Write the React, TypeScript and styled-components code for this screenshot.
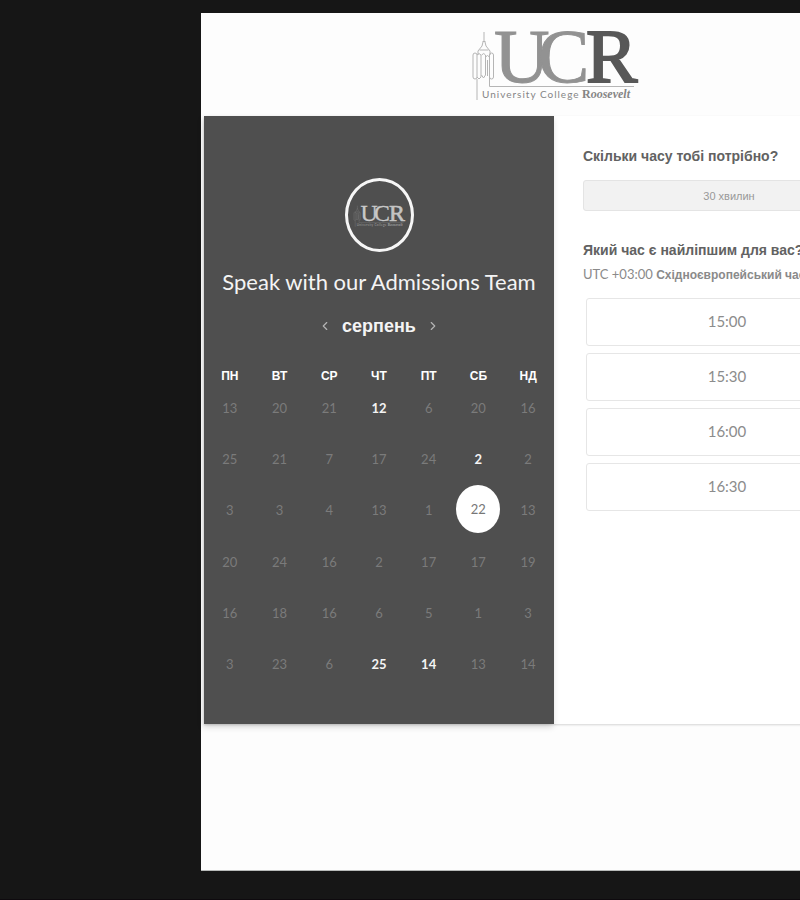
import React from "react";
import styled, { createGlobalStyle, css } from "styled-components";
import { ChevronLeft, ChevronRight } from "lucide-react";

const sans = `"Liberation Sans", Arial, sans-serif`;
const human = `Lato, "Liberation Sans", sans-serif`;

const GlobalStyle = createGlobalStyle`
  *, *::before, *::after { box-sizing: border-box; }
  body { margin: 0; background: #161616; font-family: ${sans}; }
  button { font: inherit; color: inherit; background: none; border: 0; padding: 0; cursor: pointer; }
  h1, h2, p { margin: 0; }
`;

const Page = styled.div`
  min-height: 100vh;
  padding: 13px 0 28px 25%;
  overflow: hidden;
  background: #161616;
  border-bottom: 2px solid #0e0a0e;
`;

const Sheet = styled.div`
  min-width: 707px;
  padding: 0 4px 146px 3px;
  margin-left: 1px;
  background: #fdfdfd;
  border-bottom: 1px solid #b8bab9;
`;

const Header = styled.header`
  display: flex;
  justify-content: center;
  height: 103px;
  padding-top: 9px;
`;

const Card = styled.main`
  display: grid;
  grid-template-columns: 1fr 1fr;
  background: #fff;
  box-shadow: 0 1px 2px rgba(0, 0, 0, 0.16);
`;

const CalendarPanel = styled.section`
  display: flex;
  flex-direction: column;
  align-items: center;
  padding: 62px 1px 34px;
  background: #4f4f4f;
  color: #f4f4f4;
  box-shadow: -1px 3px 6px rgba(0, 0, 0, 0.16);
`;

const Avatar = styled.div`
  display: grid;
  place-items: center;
  width: 69px;
  height: 74px;
  border: 3px solid #f6f6f6;
  border-radius: 50%;
`;

const Title = styled.h1`
  margin-top: 14px;
  font: 400 22px/32px ${human};
  white-space: nowrap;
`;

const MonthNav = styled.nav`
  display: flex;
  align-items: center;
  gap: 10px;
  height: 28px;
  margin-top: 14px;
`;

const MonthName = styled.h2`
  font: 700 18px/28px ${sans};
`;

const ArrowButton = styled.button`
  display: grid;
  place-items: center;
  width: 14px;
  height: 24px;
  color: #b4b4b4;
`;

const Calendar = styled.table`
  width: 100%;
  height: 320px;
  margin-top: 30px;
  table-layout: fixed;
  border-collapse: collapse;
  text-align: center;
`;

const Weekday = styled.th`
  height: 12px;
  padding: 0;
  font: 700 12px/12px ${sans};
  color: #fff;
`;

type DayState = "off" | "open" | "selected";

const DayCell = styled.td<{ $state: DayState }>`
  height: 51px;
  padding: 0;
  vertical-align: ${(p) => (p.$state === "selected" ? "top" : "middle")};
`;

const Day = styled.button<{ $state: DayState }>`
  display: block;
  width: 44px;
  height: 48px;
  margin: 0 auto;
  border-radius: 50%;
  font: 400 13px/20px ${human};
  color: #7b7b7b;
  ${(p) => p.$state === "open" && css`color: #f4f4f4; font-weight: 700;`}
  ${(p) => p.$state === "selected" && css`color: #777; background: #fff;`}
`;

const TimePanel = styled.section`
  padding: 30px 29px 29px;
  color: #626262;
`;

const Question = styled.h2`
  font: 700 14px/20px ${sans};
  white-space: nowrap;
`;

const Duration = styled.button`
  display: block;
  width: 100%;
  height: 31px;
  margin: 14px 0 29px;
  border: 1px solid #e4e4e4;
  border-radius: 3px;
  background: #f2f2f2;
  color: #999;
  font: 400 11px/20px ${sans};
`;

const Zone = styled.p`
  margin-top: 4px;
  font: 400 13px/20px ${human};
  color: #8a8a8a;
  white-space: nowrap;

  b { font: 700 12px/20px ${sans}; }
`;

const Slots = styled.div`
  display: grid;
  gap: 7px;
  margin-top: 13px;
  padding: 0 7px 0 3px;
`;

const Slot = styled.button`
  height: 48px;
  padding-bottom: 2px;
  border: 1px solid #e6e6e6;
  border-radius: 3px;
  background: #fff;
  color: #8c8c8c;
  font: 400 15px/20px ${human};
`;

const LogoSvg = styled.svg`
  overflow: visible;
`;

interface LogoProps {
  width: number;
  height: number;
  main: string;
  accent: string;
  caption: string;
  line: string;
}

function Logo({ width, height, main, accent, caption, line }: LogoProps) {
  return (
    <LogoSvg width={width} height={height} viewBox="0 0 168 80" role="img" aria-label="University College Roosevelt">
      <g fill="none" stroke={line} strokeWidth="1">
        <path d="M14 10v10M12.500 19.500h3M13 20l-1 4-4 5v4M15 20l1 4 4 5v4M9.500 28h9" />
        <rect x="3" y="31" width="4" height="26" rx="2" />
        <path d="M7 33q2-3 4 0v22l-2 2-2-2M11.500 33q2.500-3 4 0v20l-2 3-2-3M15.500 35q2-3 4 0" />
        <rect x="19.500" y="31" width="4" height="26" rx="2" />
        <path d="M7 57v21M17.500 38v16M19.500 54v10.500H164" />
      </g>
      <g fontFamily='"Liberation Serif", serif' fontSize="77">
        <text x="24" y="60" fill={main} stroke={main} strokeWidth="1">U</text>
        <text x="68" y="60" fill={main} stroke={main} strokeWidth="1">C</text>
        <text x="116" y="60" fill={accent} stroke={accent} strokeWidth="2">R</text>
      </g>
      <text x="12" y="76" fill={caption} fontFamily="Lato, sans-serif" fontSize="10" letterSpacing="1">
        University College
      </text>
      <text x="112" y="76" fill={caption} fontFamily='"Liberation Serif", serif' fontSize="12" fontWeight="700">
        R<tspan fontStyle="italic">oosevelt</tspan>
      </text>
    </LogoSvg>
  );
}

const weekdays = ["ПН", "ВТ", "СР", "ЧТ", "ПТ", "СБ", "НД"];
const weeks = [
  [13, 20, 21, 12, 6, 20, 16],
  [25, 21, 7, 17, 24, 2, 2],
  [3, 3, 4, 13, 1, 22, 13],
  [20, 24, 16, 2, 17, 17, 19],
  [16, 18, 16, 6, 5, 1, 3],
  [3, 23, 6, 25, 14, 13, 14],
];
const dayStates: Record<string, DayState> = {
  "0-3": "open",
  "1-5": "open",
  "2-5": "selected",
  "5-3": "open",
  "5-4": "open",
};
const times = ["15:00", "15:30", "16:00", "16:30"];

export default function App() {
  return (
    <>
      <GlobalStyle />
      <Page>
        <Sheet>
          <Header>
            <Logo width={168} height={80} main="#929292" accent="#585858" caption="#858585" line="#b5b5b5" />
          </Header>
          <Card>
            <CalendarPanel>
              <Avatar>
                <Logo width={52} height={26} main="#c8c8c8" accent="#c4c4c4" caption="#a0a0a0" line="#858585" />
              </Avatar>
              <Title>Speak with our Admissions Team</Title>
              <MonthNav aria-label="Місяць">
                <ArrowButton aria-label="Попередній місяць"><ChevronLeft size={14} /></ArrowButton>
                <MonthName>серпень</MonthName>
                <ArrowButton aria-label="Наступний місяць"><ChevronRight size={14} /></ArrowButton>
              </MonthNav>
              <Calendar>
                <thead>
                  <tr>{weekdays.map((d) => <Weekday key={d} scope="col">{d}</Weekday>)}</tr>
                </thead>
                <tbody>
                  {weeks.map((week, w) => (
                    <tr key={w}>
                      {week.map((day, d) => {
                        const state = dayStates[`${w}-${d}`] ?? "off";
                        return (
                          <DayCell key={d} $state={state}>
                            <Day $state={state} disabled={state === "off"} aria-pressed={state === "selected"}>
                              {day}
                            </Day>
                          </DayCell>
                        );
                      })}
                    </tr>
                  ))}
                </tbody>
              </Calendar>
            </CalendarPanel>
            <TimePanel>
              <Question>Скільки часу тобі потрібно?</Question>
              <Duration>30 хвилин</Duration>
              <Question>Який час є найліпшим для вас?</Question>
              <Zone>UTC +03:00 <b>Східноєвропейський час</b></Zone>
              <Slots>
                {times.map((t) => <Slot key={t}>{t}</Slot>)}
              </Slots>
            </TimePanel>
          </Card>
        </Sheet>
      </Page>
    </>
  );
}
